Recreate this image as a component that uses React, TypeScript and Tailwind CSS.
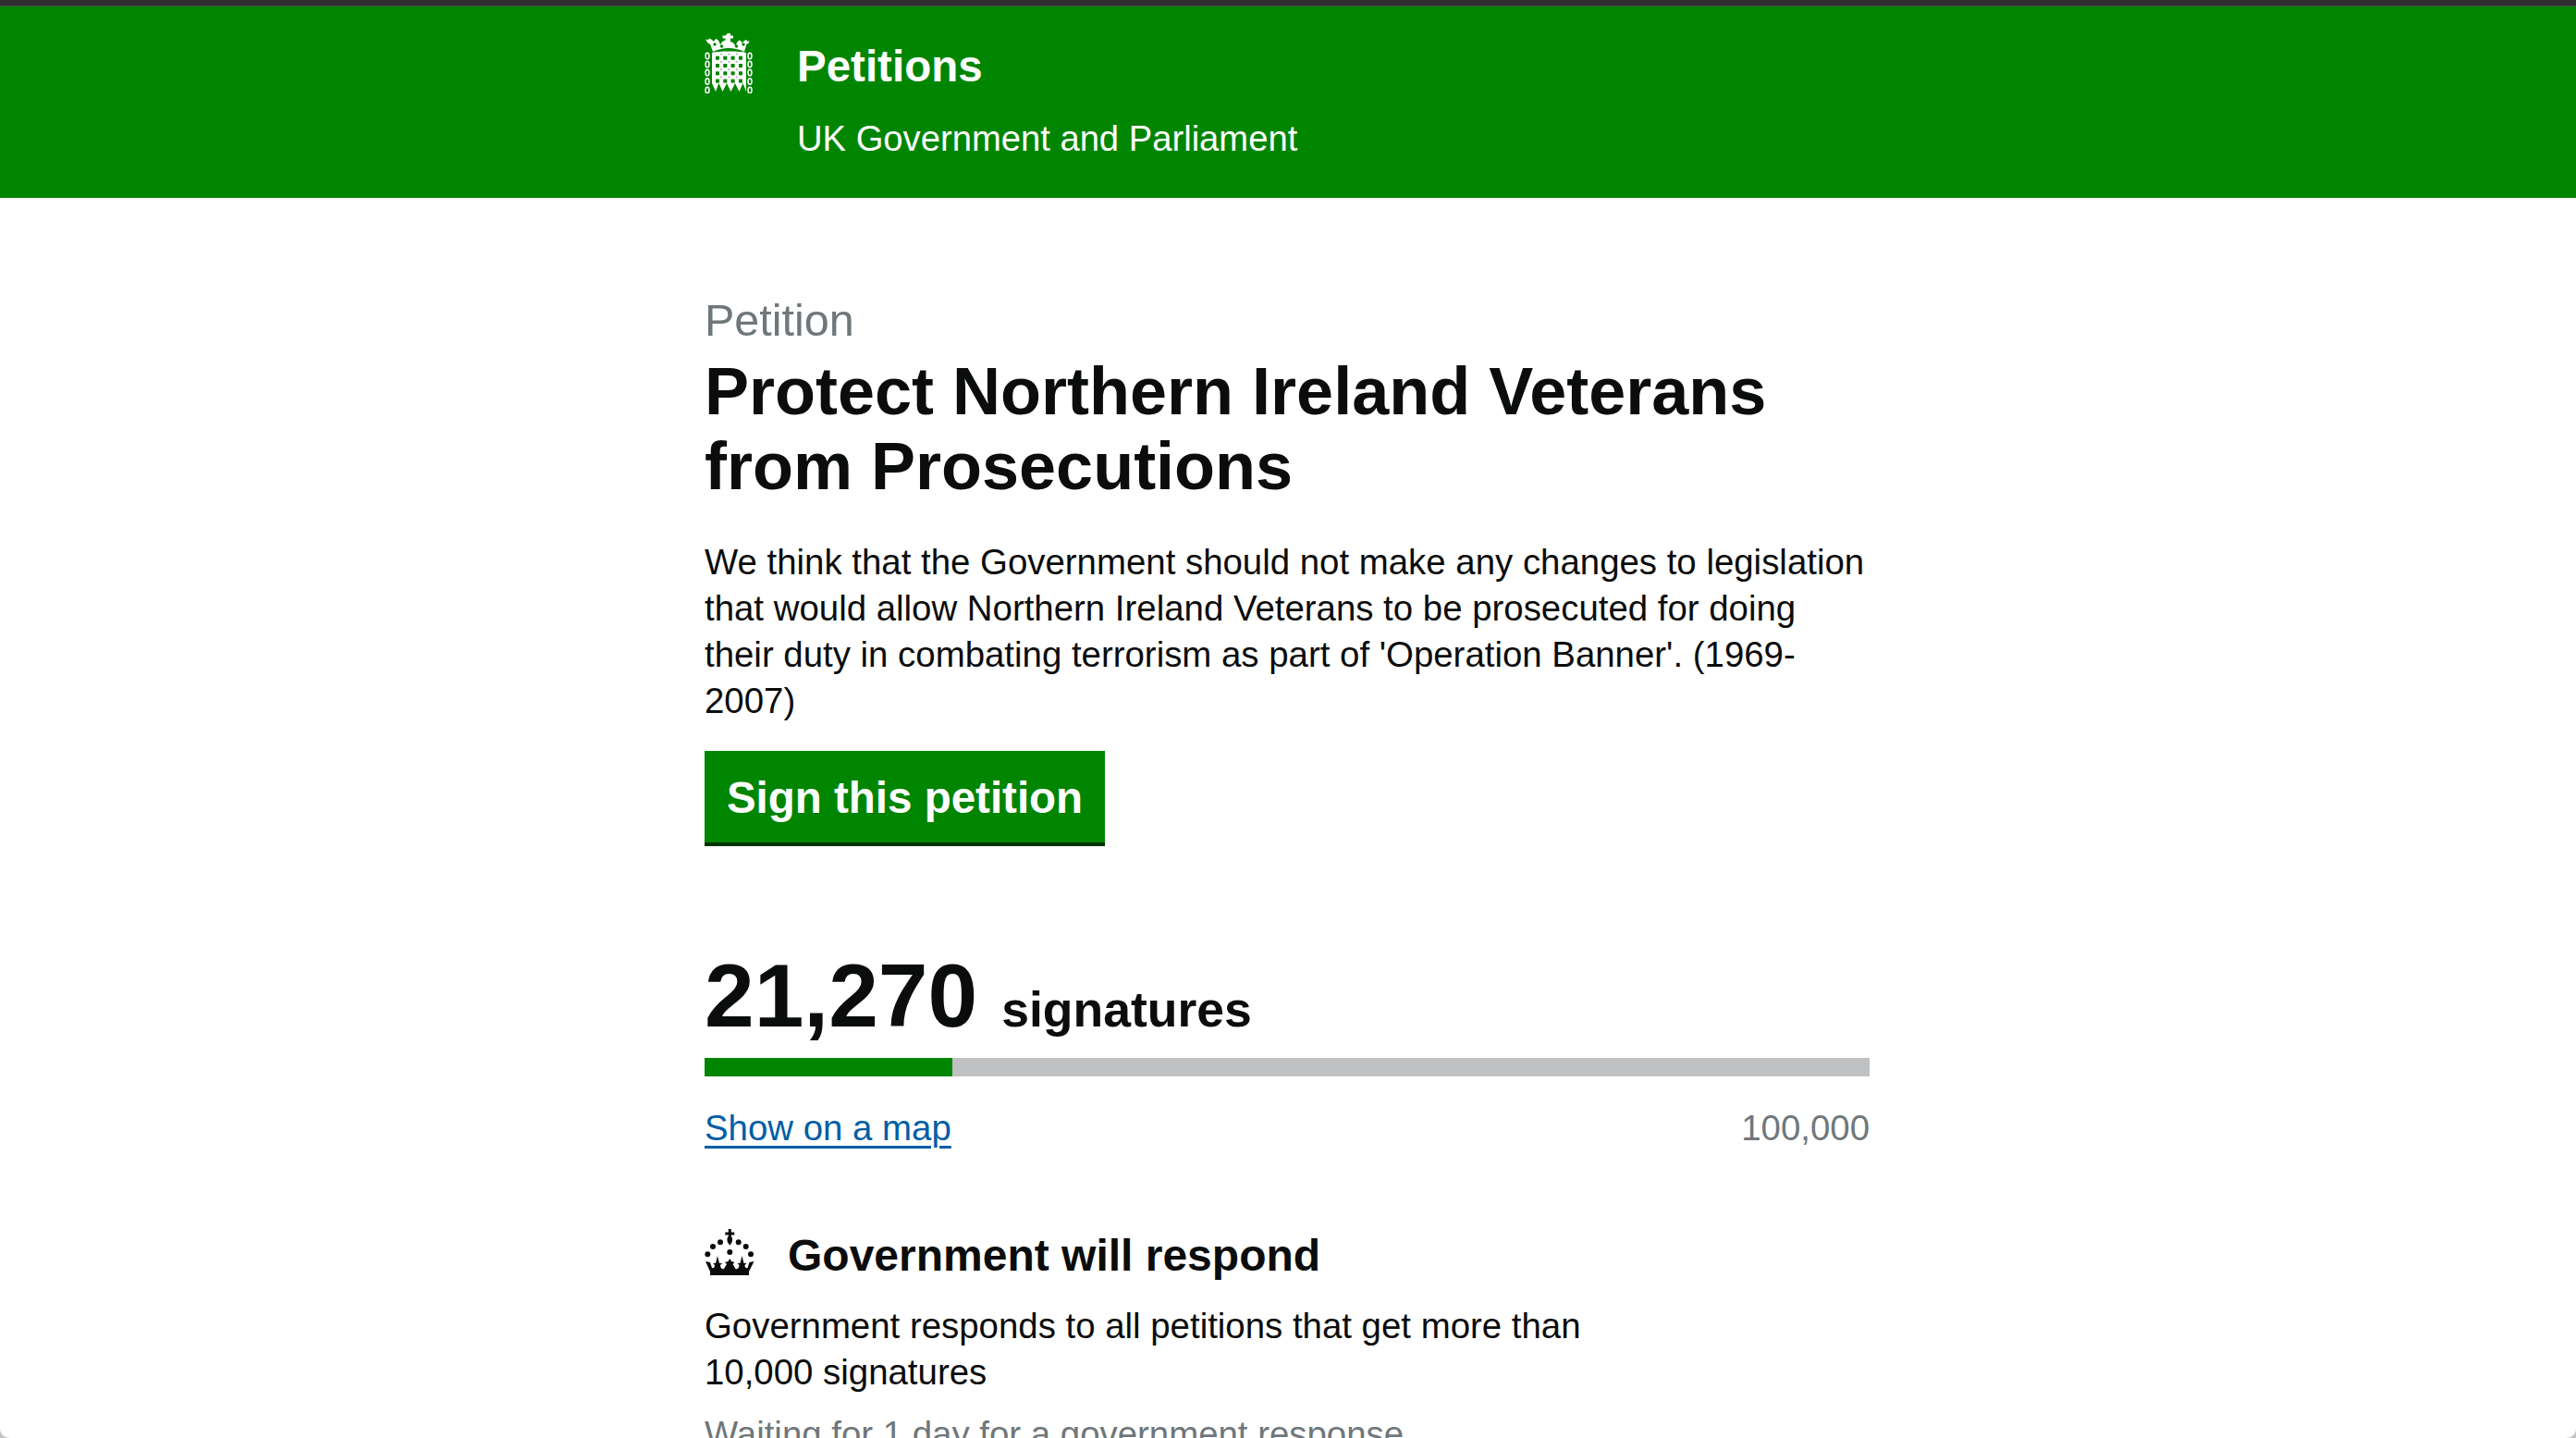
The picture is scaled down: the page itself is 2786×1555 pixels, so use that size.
const links = [24.5, 33.5, 42.5, 52, 61.5]
const cols = [14, 22.3, 30.6, 39]
const rows = [26.7, 35, 43.3, 51.6]

function Portcullis() {
  return (
    <svg width="52" height="65" viewBox="0 0 52 65" fill="#fff" className="block">
      {/* crown */}
      <path d="M25 0h3v2.500h3v3h-3v3.500c3 .5 5 3 5.500 5.500 .5-3 2-6 4.500-7 1 .5 2 1.500 2.500 3 1-1.500 3-3 5-3.500l.5 2 2.500-1-1 3-2 .5-2.500 8.500c-6-3-13-4-17-4s-11 1-17 4L6 11.500 4 11 1 6.500l3 .5 1-1.500c2 .5 4 2 5 3.500 .5-1.500 1.500-2.500 2.500-3 2.500 1 4 4 4.500 7 .5-2.500 2.500-5 5.500-5.500V5.500h-3v-3h3z" />
      <circle cx="11" cy="12" r="1.700" fill="#008500" />
      <circle cx="18.500" cy="14" r="1.700" fill="#008500" />
      <circle cx="34.500" cy="14" r="1.700" fill="#008500" />
      <circle cx="42" cy="12" r="1.700" fill="#008500" />
      {/* chains */}
      {links.map((y) => (
        <g key={y} fill="none" stroke="#fff" strokeWidth="1.500">
          <ellipse cx="3" cy={y} rx="2" ry="3.300" />
          <ellipse cx="49" cy={y} rx="2" ry="3.300" />
        </g>
      ))}
      {/* gate */}
      <path d="M8 21c6-2 31-2 37 0v42l-3.500-9-4 9-4.500-9-4.500 9-4.500-9-4.500 9-4-9-3.500 9-4-9z" />
      {rows.map((y) =>
        cols.map((x) => (
          <rect key={`${x}-${y}`} x={x - 2} y={y - 2} width="4" height="4" fill="#008500" />
        ))
      )}
      {[18.1, 26.5, 34.8].map((x) =>
        [22.5, 30.8, 39.1, 47.4].map((y) => (
          <rect key={`${x}:${y}`} x={x - 1} y={y - 1} width="2" height="2" fill="#a9c9a9" />
        ))
      )}
    </svg>
  )
}

function Crown() {
  return (
    <svg width="54" height="50" viewBox="0 0 54 50" fill="#0b0c0c" className="block">
      <path d="M25.800 0h3v3.500h3.500v3h-3.500v1.500c2 2 2 6 -1.500 9.500-3.500-3.500-3.500-7.500-1.500-9.500V6.500h-3.500v-3h3.500z" />
      <circle cx="17" cy="14.300" r="3" />
      <circle cx="36.700" cy="14.300" r="3" />
      <circle cx="9" cy="19" r="3" />
      <circle cx="44.700" cy="19" r="3" />
      <circle cx="3.300" cy="27.300" r="3" />
      <circle cx="50" cy="27.300" r="3" />
      <circle cx="27.300" cy="25" r="3" />
      <path d="M1 35L6 36L8 42C10 43 11 41 11 39L9 37L12 37L14 29L16 37L19 37L17 39C17 42 19 44 21 43L24 38L22 36L25.500 35L27.300 32L29 35L32.500 36L30.500 38L33.500 43C35.500 44 37.500 42 37.500 39L35.500 37L38.500 37L40.500 29L42.500 37L45.500 37L43.500 39C43.500 41 44.500 43 46.500 42L48.500 36L53.500 35L48 46L48 50L6 50L6 46Z" />
    </svg>
  )
}

export default function App() {
  return (
    <div className="h-[1555px] overflow-hidden bg-[#c4c4c4]">
      <div className="h-full overflow-hidden rounded-b-[10px] bg-white font-['Liberation_Sans',Arial,sans-serif] text-[#0b0c0c]">
        <div className="h-[7px] border-b border-[#4a4a4a] bg-[#2e2e2e]" />

        <header className="h-[207px] bg-[#008500] text-white">
          <div className="ml-[762px] flex w-[1260px] gap-[48px] pt-[29px]">
            <Portcullis />
            <div>
              <div className="pt-[8px] text-[47.5px] leading-[56px] font-bold">Petitions</div>
              <div className="mt-[26px] text-[38.2px] leading-[48px]">UK Government and Parliament</div>
            </div>
          </div>
        </header>

        <main className="ml-[762px] w-[1260px] pt-[104px]">
          <div className="text-[48.5px] leading-[56px] text-[#6f777b]">Petition</div>
          <h1 className="mt-[9px] w-[1200px] text-[72px] leading-[81px] font-bold">
            Protect Northern Ireland Veterans from Prosecutions
          </h1>
          <p className="mt-[38px] text-[38.4px] leading-[50px]">
            We think that the Government should not make any changes to legislation that would allow Northern Ireland Veterans to be prosecuted for doing their duty in combating terrorism as part of 'Operation Banner'. (1969-2007)
          </p>
          <button className="mt-[29px] block h-[103px] w-[433px] border-b-[4px] border-[#003300] bg-[#008500] pt-[2px] text-center text-[47.5px] leading-[56px] font-bold text-white">
            Sign this petition
          </button>

          <div className="mt-[112px] flex items-baseline gap-[26px]">
            <span className="text-[96.5px] leading-[100px] font-bold">21,270</span>
            <span className="text-[53.5px] leading-[60px] font-bold">signatures</span>
          </div>
          <div className="mt-[17px] h-[20px] bg-[#bfc1c3]">
            <div className="h-full w-[21.27%] bg-[#008500]" />
          </div>
          <div className="mt-[31px] flex justify-between text-[38.4px] leading-[50px]">
            <a href="#" className="text-[#005ea5] underline decoration-[#005ea5] decoration-[3px] underline-offset-[6px]">Show on a map</a>
            <span className="text-[#6f777b]">100,000</span>
          </div>

          <div className="mt-[83px] flex items-center gap-[36px]">
            <div className="-mt-[8px]">
              <Crown />
            </div>
            <h2 className="text-[48px] leading-[60px] font-bold">Government will respond</h2>
          </div>
          <p className="mt-[21px] w-[1000px] text-[38.4px] leading-[50px]">
            Government responds to all petitions that get more than 10,000 signatures
          </p>
          <p className="mt-[17px] text-[38.4px] leading-[50px] text-[#6f777b]">Waiting for 1 day for a government response</p>
        </main>
      </div>
    </div>
  )
}
